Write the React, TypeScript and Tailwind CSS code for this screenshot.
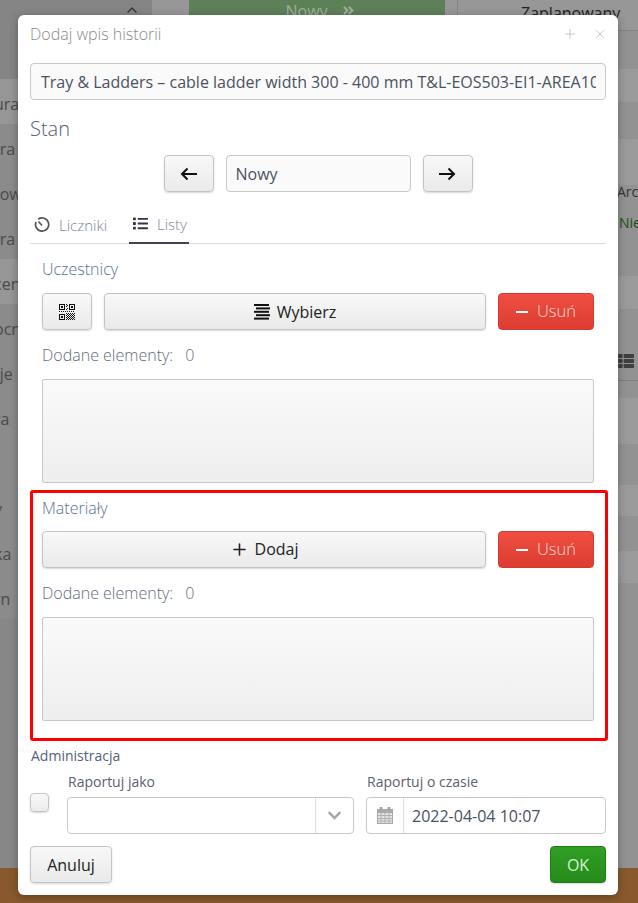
import { ChevronUp, Plus, X } from "lucide-react";
import { FaChevronDown, FaList, FaThList, FaAngleDoubleRight } from "react-icons/fa";

const btn =
  "flex items-center justify-center rounded-[4px] border border-[#c4c4c4] bg-gradient-to-b from-[#f8f8f8] to-[#eaeaea] shadow-[0_1px_2px_rgba(0,0,0,0.15)] text-[#222]";
const red =
  "flex items-center justify-center gap-[9px] w-[96px] h-[37px] rounded-[4px] border border-[#d6392e] bg-gradient-to-b from-[#f04e42] to-[#dc3d30] text-[#ffd6d2] text-[16.5px] font-light";
const box =
  "h-[104px] w-[552px] border border-[#c8c8c8] rounded-[2px] bg-gradient-to-b from-[#fafafa] to-[#eeeeee]";
const heading = "text-[16px] leading-[20px] font-light text-[#5b6f94]";
const count = "flex gap-[12px] text-[16px] leading-[20px] font-light text-[#5f6b82]";

function Usun() {
  return (
    <button className={red}>
      <span className="block w-[12px] h-[2px] bg-white" />
      <span>Usuń</span>
    </button>
  );
}

function Section({ title, children, top, rowTop }: { title: string; children: React.ReactNode; top: string; rowTop: string }) {
  return (
    <div className="flex flex-col">
      <div className={`${heading} ${top}`}>{title}</div>
      <div className={`flex gap-[12px] ${rowTop}`}>{children}<Usun /></div>
      <div className={`${count} mt-[15px]`}>
        <span>Dodane elementy:</span>
        <span>0</span>
      </div>
      <div className={`${box} mt-[14px]`} />
    </div>
  );
}

function Arrow({ dir }: { dir: "left" | "right" }) {
  return (
    <svg width="17" height="14" viewBox="0 0 17 14" fill="none" stroke="#111" strokeWidth="2" className={dir === "right" ? "rotate-180" : ""}>
      <path d="M17 7H2" />
      <path d="M7.5 1.5 2 7l5.5 5.5" />
    </svg>
  );
}

function Qr() {
  const dots = [
    [7, 0], [8, 1], [7, 2], [8, 4], [7, 5], [0, 7], [2, 7], [4, 7], [6, 7], [8, 7], [10, 7], [12, 7], [14, 7],
    [7, 9], [9, 9], [11, 9], [13, 9], [15, 9], [8, 10], [10, 10], [12, 10], [14, 10], [7, 11], [9, 11], [11, 11], [13, 11], [15, 11],
    [8, 12], [10, 12], [12, 12], [14, 12], [7, 13], [9, 13], [11, 13], [13, 13], [15, 13], [8, 14], [10, 14], [12, 14], [14, 14], [7, 15], [9, 15], [11, 15], [13, 15], [15, 15],
  ];
  const finder = (x: number, y: number) => (
    <g key={`${x}-${y}`}>
      <rect x={x + 0.5} y={y + 0.5} width="5" height="5" fill="none" stroke="#111" />
      <rect x={x + 2} y={y + 2} width="2" height="2" fill="#111" />
    </g>
  );
  return (
    <svg width="16" height="16" viewBox="0 0 16 16" fill="#111" shapeRendering="crispEdges">
      {finder(0, 0)}
      {finder(10, 0)}
      {finder(0, 10)}
      {dots.map(([x, y]) => (
        <rect key={`${x}_${y}`} x={x} y={y} width="1" height="1" />
      ))}
    </svg>
  );
}

function Calendar() {
  return (
    <svg width="16" height="17" viewBox="0 0 16 17" fill="none" stroke="#a8a8a8">
      <rect x="0.5" y="2.5" width="15" height="14" fill="#e2e2e2" />
      <rect x="0.5" y="2.5" width="15" height="3" fill="#a8a8a8" />
      <path d="M0.5 8.5h15M0.5 11.5h15M0.5 14h15M4 5.5v11M8 5.5v11M12 5.5v11" strokeWidth="0.8" />
      <rect x="3" y="0.5" width="2" height="4" fill="#a8a8a8" />
      <rect x="11" y="0.5" width="2" height="4" fill="#a8a8a8" />
    </svg>
  );
}

const leftRows = [
  { t: "ura", bg: "bg-[#969696]" }, { t: "tra", bg: "bg-[#8b8b8b]" }, { t: "tow", bg: "bg-[#8b8b8b]" },
  { t: "tra", bg: "bg-[#8b8b8b]" }, { t: "cen", bg: "bg-[#969696]" }, { t: "ocn", bg: "bg-[#8b8b8b]" },
  { t: "tje", bg: "bg-[#8b8b8b]" }, { t: "ra", bg: "bg-[#8b8b8b]" }, { t: "", bg: "bg-[#8b8b8b]" },
  { t: "y", bg: "bg-[#8b8b8b]" }, { t: "ka", bg: "bg-[#8b8b8b]" }, { t: "rn", bg: "bg-[#8b8b8b]" },
];

const rightRows = [
  "h-[38px] bg-[#929292]", "h-[33px] bg-[#9b9b9b]", "h-[37px] bg-[#929292]", "h-[46px] bg-[#9b9b9b]",
  "h-[91px] bg-[#929292]", "h-[33px] bg-[#9b9b9b]", "h-[72px] bg-[#929292] border-b border-[#7d7d7d]",
  "h-[17px] bg-[#929292]", "h-[46px] bg-[#9b9b9b]", "h-[41px] bg-[#929292]", "h-[31px] bg-[#9b9b9b]",
  "h-[35px] bg-[#929292]", "h-[32px] bg-[#9b9b9b]",
];

export default function App() {
  return (
    <div
      className="relative w-[638px] h-[903px] overflow-hidden bg-[#8b8b8b] flex flex-col"
      style={{ fontFamily: '"Open Sans", sans-serif' }}
    >
      {/* dimmed page behind the dialog */}
      <div className="flex h-[868px]">
        <div className="w-[152px] flex flex-col bg-[#8b8b8b] text-[16px] text-[#4a4a4a]">
          <div className="h-[79px] shrink-0 bg-[#858585] flex justify-end pr-[12px] pt-[2px] text-[#333]">
            <ChevronUp size={16} />
          </div>
          {leftRows.map((r, i) => (
            <div key={i} className={`h-[45px] shrink-0 flex items-center pt-[4px] ${r.bg}`}>
              <span className="-ml-[6px]">{r.t}</span>
            </div>
          ))}
          <div className="flex-1 bg-[#878787]" />
        </div>
        <div className="flex-1 bg-[#979797] flex">
          <div className="w-[37px]" />
          <div className="w-[256px] h-[20px] bg-[#5e8059] flex justify-center gap-[14px] pl-[6px] text-[16px] text-[#9cb098] leading-[22px]">
            <span>Nowy</span>
            <FaAngleDoubleRight size={13} className="mt-[4px]" />
          </div>
          <div className="flex-1 ml-[12px] flex flex-col">
            <div className="h-[31px] shrink-0 border-b border-l border-[#858585] pl-[63px] text-[16px] leading-[26px] text-[#222] overflow-hidden whitespace-nowrap">
              Zaplanowany
            </div>
            {rightRows.map((c, i) => (
              <div key={i} className={`shrink-0 ${c}`} />
            ))}
            <div className="flex-1 bg-[#929292]" />
          </div>
        </div>
      </div>
      <div className="flex-1 bg-[#89592d]" />
      <div className="absolute left-[617px] top-[181px] text-[14px] text-[#333]">Arch</div>
      <div className="absolute left-[619px] top-[212px] text-[14px] text-[#1f4d1a]">Nie</div>
      <div className="absolute left-[618px] top-[353px] text-[#3f3f3f] text-[16px]"><FaThList /></div>

      {/* dialog */}
      <div className="absolute left-[18px] top-[15px] w-[600px] h-[880px] bg-white rounded-[6px] shadow-[0_2px_8px_rgba(0,0,0,0.3)] px-[12px] flex flex-col">
        <div className="flex items-center justify-between h-[38px]">
          <span className="text-[16px] font-light text-[#8a8a8a]">Dodaj wpis historii</span>
          <div className="flex items-center gap-[15px] text-[#b5b5b5] -mr-[1px]">
            <Plus size={16} strokeWidth={1.1} />
            <X size={14} strokeWidth={1.2} />
          </div>
        </div>
        <div className="mt-[10px] h-[37px] w-[576px] rounded-[4px] border border-[#c8c8c8] bg-[#fafafa] pl-[10px] pr-[9px] flex items-center">
          <span className="block overflow-hidden whitespace-nowrap text-[16px] text-[#4a5160]">
            Tray &amp; Ladders – cable ladder width 300 - 400 mm T&amp;L-EOS503-EI1-AREA10
          </span>
        </div>
        <div className="mt-[15px] text-[20px] leading-[28px] font-light text-[#55607a]">Stan</div>
        <div className="mt-[12px] flex justify-center gap-[12px]">
          <button className={`${btn} w-[50px] h-[37px]`}>
            <Arrow dir="left" />
          </button>
          <div className="w-[185px] h-[37px] rounded-[4px] border border-[#c8c8c8] bg-[#fafafa] flex items-center pl-[9px] text-[16px] text-[#4a5160]">
            Nowy
          </div>
          <button className={`${btn} w-[50px] h-[37px]`}>
            <Arrow dir="right" />
          </button>
        </div>
        <div className="mt-[15px] h-[37px] w-[576px] border-b border-[#dcdcdc] flex text-[15px] font-light text-[#7e8799]">
          <div className="flex items-center gap-[9px] pl-[4px] w-[99px]">
            <svg width="16" height="16" viewBox="0 0 16 16" fill="none" stroke="#555" strokeWidth="1.7" className="-mt-[1px]">
              <path d="M4.2 2.2A6.6 6.6 0 1 1 2 5" />
              <path d="M4.5 4.5 8 8.5" />
            </svg>
            <span>Liczniki</span>
          </div>
          <div className="h-[37px] w-[60px] flex items-center gap-[9px] pl-[4px] border-b-2 border-[#3f4158]">
            <FaList size={15} className="text-[#2f3446] -mt-[2px]" />
            <span>Listy</span>
          </div>
        </div>
        <div className="px-[12px]">
          <Section title="Uczestnicy" top="mt-[15px]" rowTop="mt-[14px]">
            <button className={`${btn} w-[50px] h-[37px]`}>
              <Qr />
            </button>
            <button className={`${btn} w-[382px] h-[37px] gap-[7px] text-[16px]`}>
              <svg width="16" height="16" viewBox="0 0 16 16" fill="#111">
                <rect x="0" y="0" width="15" height="2" />
                <rect x="2" y="3.4" width="14" height="2" />
                <rect x="0" y="6.8" width="15" height="2" />
                <rect x="2" y="10.2" width="14" height="2" />
                <rect x="0" y="13.6" width="15" height="2" />
              </svg>
              <span>Wybierz</span>
            </button>
          </Section>
        </div>
        <div className="mt-[7px] h-[251px] w-[578px] border-[3px] border-[#ff0000] rounded-[3px] px-[9px]">
          <Section title="Materiały" top="mt-[5px]" rowTop="mt-[13px]">
            <button className={`${btn} w-[444px] h-[37px] gap-[6px] text-[16px] pb-[1px]`}>
              <Plus size={19} strokeWidth={2} />
              <span>Dodaj</span>
            </button>
          </Section>
        </div>
        <div className="mt-[5px] text-[14px] leading-[20px] text-[#55607a] pl-[1px]">Administracja</div>
        <div className="flex mt-[6px]">
          <div className="w-[37px] pt-[21px]">
            <div className="w-[19px] h-[19px] rounded-[4px] border border-[#c4c4c4] bg-gradient-to-b from-[#f8f8f8] to-[#ebebeb] shadow-[0_1px_2px_rgba(0,0,0,0.15)]" />
          </div>
          <div className="w-[287px] mr-[12px]">
            <div className="text-[14px] leading-[20px] text-[#5a6270] pl-[1px]">Raportuj jako</div>
            <div className="mt-[5px] h-[37px] rounded-[4px] border border-[#c8c8c8] flex justify-end">
              <div className="w-[38px] border-l border-[#dcdcdc] flex items-center justify-center text-[#a5a5a5]">
                <FaChevronDown size={15} />
              </div>
            </div>
          </div>
          <div className="w-[240px]">
            <div className="text-[14px] leading-[20px] text-[#5a6270] pl-[1px]">Raportuj o czasie</div>
            <div className="mt-[5px] h-[37px] rounded-[4px] border border-[#c8c8c8] flex items-center">
              <div className="w-[37px] h-full border-r border-[#dcdcdc] flex items-center justify-center">
                <Calendar />
              </div>
              <span className="pl-[8px] text-[16px] text-[#4a5160]">2022-04-04 10:07</span>
            </div>
          </div>
        </div>
        <div className="mt-[12px] w-[576px] flex justify-between">
          <button className={`${btn} w-[82px] h-[37px] text-[16px]`}>Anuluj</button>
          <button className="w-[56px] h-[37px] rounded-[4px] border border-[#237a16] bg-gradient-to-b from-[#30a024] to-[#268a1b] text-[16px] text-[#d5efd0] shadow-[0_1px_2px_rgba(0,0,0,0.15)]">
            OK
          </button>
        </div>
      </div>
    </div>
  );
}
